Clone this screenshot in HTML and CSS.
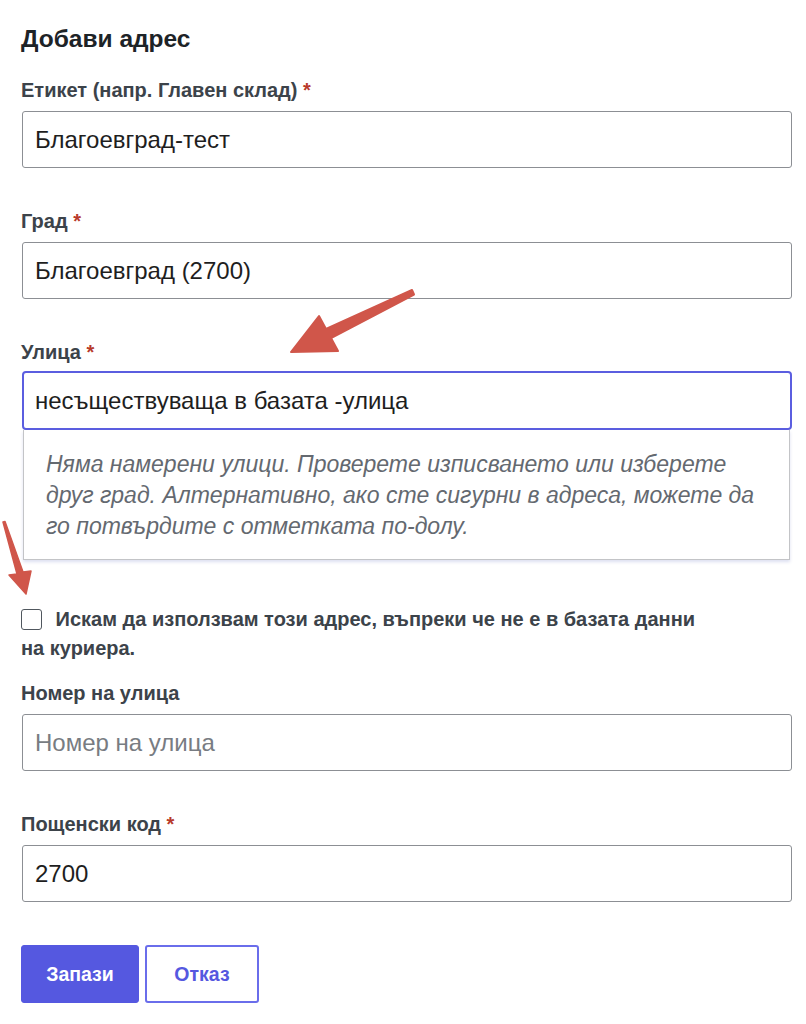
FILE: index.html
```html
<!DOCTYPE html>
<html lang="bg">
<head>
  <meta charset="UTF-8">
  <title>Добави адрес</title>
  <meta name="viewport" content="width=device-width, initial-scale=1.0">
  <link rel="stylesheet" href="styles.css">
</head>
<body>

  <div class="panel">
    <h2>Добави адрес</h2>

    <div class="field">
      <label for="label">Етикет (напр. Главен склад) <span class="req">*</span></label>
      <input type="text" id="label" value="Благоевград-тест">
    </div>

    <div class="field">
      <label for="city">Град <span class="req">*</span></label>
      <input type="text" id="city" value="Благоевград (2700)">
    </div>

    <div class="field street">
      <label for="street">Улица <span class="req">*</span></label>
      <input type="text" id="street" class="focused" value="несъществуваща в базата -улица">
      <div class="suggest">
        Няма намерени улици. Проверете изписването или изберете друг град. Алтернативно, ако сте сигурни в адреса, можете да го потвърдите с отметката по-долу.
      </div>
    </div>

    <label class="confirm">
      <input type="checkbox" id="force">
      Искам да използвам този адрес, въпреки че не е в базата данни на куриера.
    </label>

    <div class="field">
      <label for="number">Номер на улица</label>
      <input type="text" id="number" placeholder="Номер на улица">
    </div>

    <div class="field">
      <label for="zip">Пощенски код <span class="req">*</span></label>
      <input type="text" id="zip" value="2700">
    </div>

    <div class="actions">
      <button class="btn primary">Запази</button>
      <button class="btn outline">Отказ</button>
    </div>
  </div>

  <!-- red hint arrows -->
  <svg class="marks" width="806" height="1024" viewBox="0 0 806 1024">
    <polygon points="291,352 319,316 326,329 412,290 414,294.5 331,338 338,351"
             fill="#d0564a" stroke="#d0564a" stroke-width="2" stroke-linejoin="round"/>
    <polygon points="26,594 9,575 17,574 3,522 5,521.6 23,572 31,571"
             fill="#d0564a" stroke="#d0564a" stroke-width="1.5" stroke-linejoin="round"/>
  </svg>

</body>
</html>
```

FILE: styles.css
```css
body {
  margin: 0;
  background: #fff;
  font-family: "Liberation Sans", Arial, sans-serif;
  color: #1d2327;
}

.panel {
  position: relative;
  padding: 24px 14px 20px 21px;
}

.panel h2 {
  font-size: 24.5px;
  font-weight: bold;
  margin: 0 0 26px;
  line-height: 30px;
  color: #1d2327;
}

.field {
  display: flex;
  flex-direction: column;
  margin-bottom: 43px;
}

.field label {
  font-size: 20px;
  font-weight: bold;
  line-height: 20px;
  margin-bottom: 11px;
  color: #3c434a;
}

.req {
  color: #b83a2b;
}

.field input {
  margin-left: 1px;
  height: 57px;
  box-sizing: border-box;
  padding: 0 12px;
  font-family: inherit;
  font-size: 24px;
  color: #1e1e1e;
  border: 1px solid #8c8f94;
  border-radius: 3px;
  background: #fff;
}

.field input::placeholder {
  color: #787c82;
}

.street label {
  margin-bottom: 9px;
}

.field input.focused {
  height: 59px;
  border: 2px solid #5b5ee0;
  border-radius: 4px;
  padding: 0 11px;
  outline: none;
}

.street {
  margin-bottom: 0;
}

.suggest {
  margin: 0 2px;
  padding: 19px 22px 17px;
  border: 1px solid #c3c4c7;
  border-top: none;
  box-shadow: 0 2px 3px rgba(120, 130, 200, 0.25);
  font-style: italic;
  font-size: 23px;
  line-height: 31px;
  color: #646970;
}

.confirm {
  display: block;
  max-width: 700px;
  margin: 45px 0 20px;
  font-size: 20px;
  font-weight: bold;
  line-height: 29px;
  color: #3c434a;
}

.confirm input {
  width: 21px;
  height: 21px;
  margin: 0 8px 0 0;
  vertical-align: -4px;
  appearance: none;
  border: 1.5px solid #50575e;
  border-radius: 3px;
  background: #fff;
}

.actions {
  display: flex;
  gap: 6px;
}

.btn {
  height: 58px;
  padding: 0 20px;
  font-family: inherit;
  font-size: 19.5px;
  font-weight: bold;
  border-radius: 3px;
  cursor: pointer;
}

.btn.primary {
  width: 118px;
  background: #5558e0;
  border: 1px solid #5558e0;
  color: #fff;
}

.btn.outline {
  width: 114px;
  background: #fff;
  border: 2px solid #6a6deb;
  color: #5558e0;
}

.marks {
  position: absolute;
  left: 0;
  top: 0;
  pointer-events: none;
}
```
